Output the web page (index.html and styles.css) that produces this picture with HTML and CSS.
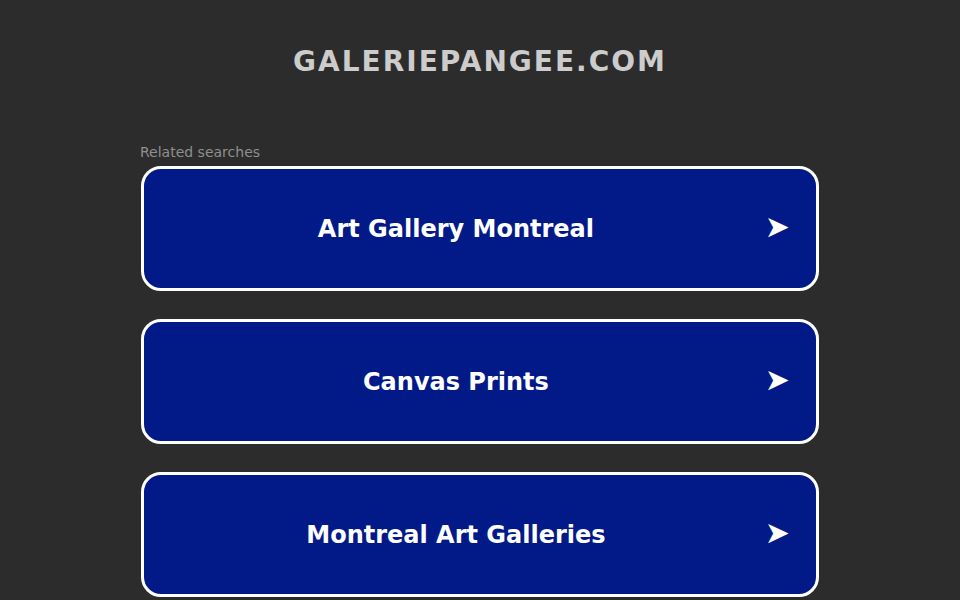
FILE: index.html
```html
<!DOCTYPE html>
<html>
<head>
  <title>galeriepangee.com</title>
  <link rel="stylesheet" href="styles.css">
</head>
<body>
  <div class="header">
    <h1 class="domain">GALERIEPANGEE.COM</h1>
  </div>

  <div class="content">
    <div class="related-title">Related searches</div>
    <a class="search-link" href="#">
      <span class="link-text">Art Gallery Montreal</span>
      <span class="arrow">&#10148;</span>
    </a>
    <a class="search-link" href="#">
      <span class="link-text">Canvas Prints</span>
      <span class="arrow">&#10148;</span>
    </a>
    <a class="search-link" href="#">
      <span class="link-text">Montreal Art Galleries</span>
      <span class="arrow">&#10148;</span>
    </a>
  </div>
</body>
</html>
```

FILE: styles.css
```css
body {
  margin: 0;
  background-color: #2c2c2c;
  font-family: "DejaVu Sans", sans-serif;
}

.header {
  padding-top: 42px;
  text-align: center;
}

.domain {
  margin: 0;
  font-size: 28px;
  font-weight: bold;
  letter-spacing: 2px;
  line-height: 40px;
  color: #cccccc;
}

.content {
  width: 680px;
  margin: 0 auto;
  padding-top: 60px;
}

.related-title {
  font-size: 14px;
  line-height: 20px;
  color: #8f8f8f;
  margin-bottom: 4px;
}

.search-link {
  display: flex;
  align-items: center;
  box-sizing: border-box;
  width: 678px;
  height: 125px;
  margin: 0 0 28px 1px;
  border: 3px solid #ffffff;
  border-radius: 20px;
  background-color: #021a88;
  color: #ffffff;
  text-decoration: none;
}

.link-text {
  flex: 1;
  padding-left: 3px;
  text-align: center;
  font-size: 24px;
  font-weight: bold;
}

.arrow {
  font-size: 30px;
  margin-right: 26px;
  margin-bottom: 4px;
}
```
